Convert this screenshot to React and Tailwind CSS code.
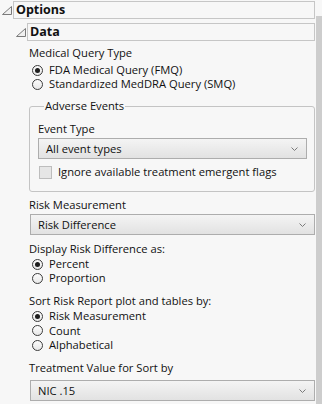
import React from "react";

const font = { fontFamily: '"Segoe UI", "Open Sans", "Noto Sans", sans-serif' };
const txt = "text-[11.2px] leading-[14px] text-[#111]";

function Tri({ className }) {
  return (
    <svg width="10" height="9" viewBox="0 0 10 9" className={className}>
      <polygon points="0.5,8.5 9.5,0.5 9.5,8.5" fill="#f0f0f0" stroke="#7a7a7a" strokeWidth="1" />
    </svg>
  );
}

function Radio({ checked, label }) {
  return (
    <div className="flex items-center h-[14px]">
      <div className="ml-[3px] w-[11px] h-[11px] rounded-full border border-[#3c3c3c] bg-gradient-to-b from-[#fcfcfc] to-[#e8e8e8] flex items-center justify-center">
        {checked && <div className="w-[5px] h-[5px] rounded-full bg-[#1e1e1e]" />}
      </div>
      <span className={`ml-[6px] ${txt}`}>{label}</span>
    </div>
  );
}

function Select({ value, className }) {
  return (
    <div className={`h-[21px] border border-[#adadad] bg-gradient-to-b from-[#f4f4f4] to-[#e2e2e2] flex items-center justify-between pl-[7px] pr-[8px] ${className}`}>
      <span className={txt}>{value}</span>
      <svg width="7" height="4" viewBox="0 0 7 4">
        <polyline points="0.5,0.5 3.5,3.5 6.5,0.5" fill="none" stroke="#7a7a7a" strokeWidth="1" />
      </svg>
    </div>
  );
}

export default function App() {
  return (
    <div className="w-[322px] h-[404px] overflow-hidden bg-[#f7f7f7] flex" style={font}>
      <div className="w-[316px] flex flex-col">
        {/* Options header */}
        <div className="flex items-start pt-[1px]">
          <Tri className="ml-[2px] mt-[5px]" />
          <div className="ml-[1px] w-[302px] h-[18px] border border-[#c6c6c6] flex items-center pl-[2px]">
            <span className="text-[12.5px] font-bold leading-[14px] text-[#111]">Options</span>
          </div>
        </div>

        {/* Data header */}
        <div className="flex items-start mt-[4px]">
          <Tri className="ml-[16px] mt-[5px]" />
          <div className="ml-[1px] w-[288px] h-[18px] border border-[#c6c6c6] flex items-center pl-[2px]">
            <span className="text-[12.5px] font-bold leading-[14px] text-[#111]">Data</span>
          </div>
        </div>

        <div className="pl-[29px] flex flex-col">
          <div className={`mt-[5px] ${txt}`}>Medical Query Type</div>
          <div className="mt-[3px]">
            <Radio checked label="FDA Medical Query (FMQ)" />
            <Radio label="Standardized MedDRA Query (SMQ)" />
          </div>

          <fieldset className="mt-[8px] w-[286px] border border-[#c4c4c4] rounded-[3px] pl-[8px] pr-[7px] pb-[12px]">
            <legend className={`ml-[6px] px-[1px] ${txt}`}>Adverse Events</legend>
            <div className={`mt-[9px] ${txt}`}>Event Type</div>
            <Select value="All event types" className="mt-[2px]" />
            <div className="flex items-center mt-[6px]">
              <div className="ml-[1px] w-[13px] h-[13px] border border-[#bdbdbd] bg-[#e6e6e6]" />
              <span className={`ml-[6px] ${txt}`}>Ignore available treatment emergent flags</span>
            </div>
          </fieldset>

          <div className={`mt-[6px] ${txt}`}>Risk Measurement</div>
          <Select value="Risk Difference" className="mt-[2px] ml-[1px] w-[285px]" />

          <div className={`mt-[7px] ${txt}`}>Display Risk Difference as:</div>
          <div className="mt-[1px]">
            <Radio checked label="Percent" />
            <Radio label="Proportion" />
          </div>

          <div className={`mt-[9px] ${txt}`}>Sort Risk Report plot and tables by:</div>
          <div className="mt-[1px] flex flex-col gap-[0.5px]">
            <Radio checked label="Risk Measurement" />
            <Radio label="Count" />
            <Radio label="Alphabetical" />
          </div>

          <div className={`mt-[9px] ${txt}`}>Treatment Value for Sort by</div>
          <Select value="NIC .15" className="mt-[5px] ml-[1px] w-[285px]" />
        </div>
      </div>
      <div className="w-[6px] flex flex-col">
        <div className="h-[16px]" />
        <div className="flex-1 bg-[#cdcdcd]" />
      </div>
    </div>
  );
}
